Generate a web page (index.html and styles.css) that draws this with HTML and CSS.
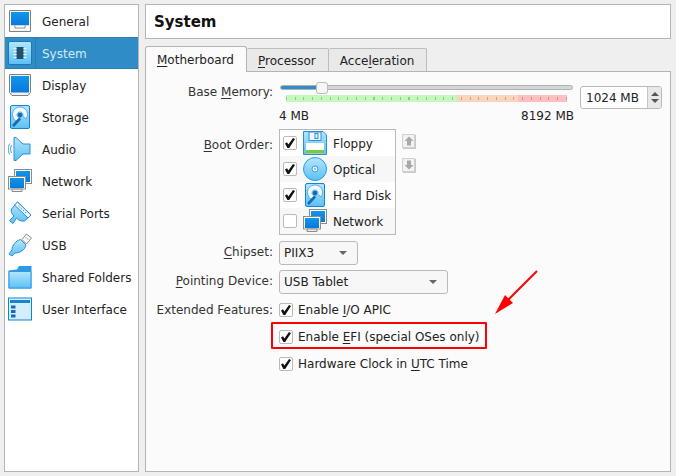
FILE: index.html
```html
<!DOCTYPE html>
<html lang="en">
<head>
<meta charset="utf-8">
<title>System</title>
<link rel="stylesheet" href="styles.css">
</head>
<body>
<svg class="defs" width="0" height="0" aria-hidden="true">
  <defs>
    <linearGradient id="blue" x1="0" y1="0" x2="0" y2="1"><stop offset="0" stop-color="#0f97ea"/><stop offset="1" stop-color="#0a78dc"/></linearGradient>
    <linearGradient id="sky" x1="0" y1="0" x2="0" y2="1"><stop offset="0" stop-color="#b4e6fc"/><stop offset="1" stop-color="#5cc0f4"/></linearGradient>
    <symbol id="i-general" viewBox="0 0 24 24"><path d="M1.500 1.500H22.500V22.500H1.500Z" fill="#f6f6f6" stroke="#808080"/><rect x="3" y="3" width="18" height="13.500" fill="url(#blue)"/><path d="M3 16.500H21V21H3Z" fill="#fff"/><path d="M7 16.500V19H17V16.500" fill="none" stroke="#8c8c8c"/></symbol>
    <symbol id="i-system" viewBox="0 0 24 24"><rect x="0.500" y="0.500" width="23" height="23" rx="1.500" fill="url(#sky)" stroke="#1a78bd"/><rect x="8.500" y="6" width="7" height="12" fill="#24506f"/><path d="M5.500 7.500H8.500M5.500 10.500H8.500M5.500 13.500H8.500M5.500 16.500H8.500M15.500 7.500H18.500M15.500 10.500H18.500M15.500 13.500H18.500M15.500 16.500H18.500" stroke="#e6f6ff"/></symbol>
    <symbol id="i-display" viewBox="0 0 24 24"><path d="M1.500 1.500H22.500V19.500L20 22.500H4L1.500 19.500Z" fill="#f2f2f2" stroke="#808080"/><rect x="3" y="3" width="18" height="16.500" fill="url(#blue)"/></symbol>
    <symbol id="i-storage" viewBox="0 0 24 24"><rect x="2.500" y="0.500" width="19" height="23" rx="1.500" fill="url(#sky)" stroke="#1583cf"/><path d="M12 2C7.500 2 4.500 5.500 4.500 9.500C4.500 13 6.500 15.500 9 16.500L13 12.500C11 13 9 12 9 10C9 8 10.500 6.800 12.500 7C14.500 7.200 15.500 9 14.800 11L18 14C19 12.500 19.500 11 19.500 9.500C19.500 5.500 16.500 2 12 2Z" fill="#eef9ff" stroke="#2f93d8" stroke-width=".7"/><circle cx="12" cy="10" r="2.300" fill="#1668b8"/><path d="M5 21L12 13.500" stroke="#1668b8" stroke-width="2.600"/></symbol>
    <symbol id="i-audio" viewBox="0 0 24 24"><path d="M6 0.500H8L15 7H22V17H15L8 23.500H6Z" fill="url(#sky)" stroke="#2a8fd8"/><path d="M3.500 8C2.300 10.500 2.300 13.500 3.500 16M1.800 6.500C-0.200 10 -0.200 14 1.800 17.500" fill="none" stroke="#2a8fd8" stroke-width=".9"/></symbol>
    <symbol id="i-network" viewBox="0 0 24 24"><rect x="6.500" y="0.500" width="17" height="14" fill="#fff" stroke="#8c8c8c"/><rect x="8" y="2" width="14" height="11" fill="url(#blue)"/><rect x="0.500" y="7.500" width="17" height="12.500" fill="#fff" stroke="#8c8c8c"/><rect x="2" y="9" width="14" height="10" fill="url(#blue)"/><path d="M4 20H14V22.500H4Z" fill="#eee" stroke="#8c8c8c"/></symbol>
    <symbol id="i-serial" viewBox="0 0 24 24"><path d="M9.500 1L23 14L16.500 20C13.500 20.500 10.500 19.500 8.500 17L5 22.500L1.500 19.500L6 15C4 13 2.800 11 3.500 8Z" fill="url(#sky)" stroke="#2a8fd8"/><path d="M9.500 1L23 14L20 17L6.500 4Z" fill="#eaf7ff" stroke="#2a8fd8"/><path d="M10.500 5L18.500 12.500" stroke="#2a8fd8" stroke-dasharray="1.500 1.500"/></symbol>
    <symbol id="i-usb" viewBox="0 0 24 24"><path d="M12.500 6.500L18 12C17 17 12 20 7 20L4 23L1 21L4 17C4 12.500 8 7.500 12.500 6.500Z" fill="url(#sky)" stroke="#2a8fd8"/><path d="M14 6.500L18.500 1L23.500 5L18.500 11Z" fill="#f6f6f6" stroke="#8c8c8c"/><path d="M18 4.500L19 5.500M20 6.500L19.500 7" stroke="#777"/></symbol>
    <symbol id="i-folder" viewBox="0 0 24 24"><path d="M0.500 5.500L9 4.500L11 1H23.500V23.500H0.500Z" fill="#2d9be4"/><path d="M1 6.500H23V23H1Z" fill="url(#sky)" stroke="#2d9be4"/></symbol>
    <symbol id="i-ui" viewBox="0 0 24 24"><rect x="0.500" y="1" width="23" height="22" fill="#d4effc" stroke="#1583cf"/><rect x="2" y="3" width="20" height="3" fill="#1583cf"/><path d="M3 8.500H7.500V11.500H3ZM3 13H7.500V16H3ZM3 17.500H7.500V20.500H3Z" fill="#1469b8"/></symbol>
    <symbol id="i-floppy" viewBox="0 0 24 24"><path d="M0.500 0.500H20L23.500 4V23.500H0.500Z" fill="url(#sky)" stroke="#2a8fd8"/><path d="M6 1H18V9.500H6Z" fill="#f0f9ff" stroke="#2a8fd8"/><rect x="12" y="2.500" width="3" height="5" fill="none" stroke="#2a8fd8"/><rect x="3" y="12" width="18" height="10.500" fill="#fff"/><rect x="3" y="19" width="18" height="3.500" fill="#7ac74a"/></symbol>
    <symbol id="i-optical" viewBox="0 0 24 24"><circle cx="12" cy="12" r="11.500" fill="url(#sky)" stroke="#2a9be4"/><circle cx="12" cy="12" r="3" fill="#e8f6ff" stroke="#3b9fdd"/><circle cx="12" cy="12" r="1" fill="#6dbcee"/></symbol>
  </defs>
</svg>

<main class="page">
  <nav class="side">
    <div class="side-item"><svg class="ico"><use href="#i-general"/></svg><span>General</span></div>
    <div class="side-item active"><svg class="ico"><use href="#i-system"/></svg><span>System</span></div>
    <div class="side-item"><svg class="ico"><use href="#i-display"/></svg><span>Display</span></div>
    <div class="side-item"><svg class="ico"><use href="#i-storage"/></svg><span>Storage</span></div>
    <div class="side-item"><svg class="ico"><use href="#i-audio"/></svg><span>Audio</span></div>
    <div class="side-item"><svg class="ico"><use href="#i-network"/></svg><span>Network</span></div>
    <div class="side-item"><svg class="ico"><use href="#i-serial"/></svg><span>Serial Ports</span></div>
    <div class="side-item"><svg class="ico"><use href="#i-usb"/></svg><span>USB</span></div>
    <div class="side-item"><svg class="ico"><use href="#i-folder"/></svg><span>Shared Folders</span></div>
    <div class="side-item"><svg class="ico"><use href="#i-ui"/></svg><span>User Interface</span></div>
  </nav>

  <section class="content">
    <h1 class="title">System</h1>
    <div class="tabs">
      <div class="tab current"><u>M</u>otherboard</div>
      <div class="tab"><u>P</u>rocessor</div>
      <div class="tab">Acce<u>l</u>eration</div>
    </div>
    <div class="panel">
      <div class="row row-mem">
        <div class="label">Base <u>M</u>emory:</div>
        <div class="mem">
          <div class="mem-main">
            <div class="slider"><div class="fill"></div><div class="thumb"></div></div>
            <div class="scale"><i class="g"></i><i class="o"></i><i class="r"></i></div>
            <div class="limits"><span>4 MB</span><span>8192 MB</span></div>
          </div>
          <div class="spin"><span>1024 MB</span><div class="spin-btn"><b class="up"></b><b class="down"></b></div></div>
        </div>
      </div>

      <div class="row row-boot">
        <div class="label label-boot"><u>B</u>oot Order:</div>
        <div class="boot">
          <div class="boot-item"><span class="cb on"></span><svg class="ico"><use href="#i-floppy"/></svg><span class="boot-name">Floppy</span></div>
          <div class="boot-item alt"><span class="cb on"></span><svg class="ico"><use href="#i-optical"/></svg><span class="boot-name">Optical</span></div>
          <div class="boot-item"><span class="cb on"></span><svg class="ico"><use href="#i-storage"/></svg><span class="boot-name">Hard Disk</span></div>
          <div class="boot-item alt"><span class="cb"></span><svg class="ico"><use href="#i-network"/></svg><span class="boot-name">Network</span></div>
        </div>
        <div class="moves">
          <div class="move"><svg width="10" height="10" viewBox="0 0 10 10"><path d="M5 0.500L9.500 5H7V9.500H3V5H0.500Z" fill="#a8a8a8"/></svg></div>
          <div class="move"><svg width="10" height="10" viewBox="0 0 10 10"><path d="M5 9.500L9.500 5H7V0.500H3V5H0.500Z" fill="#a8a8a8"/></svg></div>
        </div>
      </div>

      <div class="row row-combo">
        <div class="label"><u>C</u>hipset:</div>
        <div class="combo chipset"><span>PIIX3</span><b class="caret"></b></div>
      </div>
      <div class="row row-combo">
        <div class="label"><u>P</u>ointing Device:</div>
        <div class="combo pointing"><span>USB Tablet</span><b class="caret"></b></div>
      </div>

      <div class="row row-check first">
        <div class="label">Extended Features:</div>
        <div class="check"><span class="cb on"></span><span>Enable <u>I</u>/O APIC</span></div>
      </div>
      <div class="row row-check">
        <div class="label"></div>
        <div class="check"><span class="cb on"></span><span>Enable <u>E</u>FI (special OSes only)</span></div>
      </div>
      <div class="row row-check">
        <div class="label"></div>
        <div class="check"><span class="cb on"></span><span>Hardware Clock in <u>U</u>TC Time</span></div>
      </div>
    </div>
  </section>
</main>

<div class="mark-box"></div>
<svg class="mark-arrow" width="50" height="52" viewBox="0 0 50 52"><path d="M46 2L17 31" stroke="#f00" stroke-width="2" fill="none"/><path d="M4 45L14 26L22 34Z" fill="#f00"/></svg>
</body>
</html>
```

FILE: styles.css
```css
* { box-sizing: border-box; }
html, body { margin: 0; padding: 0; }
body {
  width: 676px;
  height: 476px;
  overflow: hidden;
  background: #efefef;
  color: #222;
  font: 12px/16px "DejaVu Sans", sans-serif;
  position: relative;
}
u { text-underline-offset: 2px; text-decoration-thickness: 1px; }
.defs { position: absolute; }

.page { display: flex; gap: 6px; padding: 4px 5px 4px 4px; height: 476px; }

.side {
  width: 135px;
  flex: none;
  background: #fff;
  border: 1px solid #b4b4b4;
}
.side-item {
  height: 32px;
  display: flex;
  align-items: center;
  gap: 9px;
  padding-left: 3px;
}
.side-item > span { padding-top: 2px; margin-left: 1px; }
.side-item.active {
  background: linear-gradient(90deg, #308cc6 30px, #2a7db2 30px 31px, #308cc6 31px);
  color: #cfeafa;
  box-shadow: inset 0 1px 0 #2b7fb5, inset 0 -1px 0 #2b7fb5;
}
.ico { width: 24px; height: 24px; flex: none; }

.content { flex: 1; display: flex; flex-direction: column; min-width: 0; }
.title {
  margin: 0;
  height: 35px;
  padding-left: 8px;
  background: #fff;
  border: 1px solid #b4b4b4;
  font-size: 15px;
  line-height: 35px;
  font-weight: bold;
  color: #111;
}

.tabs { display: flex; margin-top: 7px; height: 25px; align-items: flex-end; position: relative; z-index: 1; }
.tab {
  height: 23px;
  padding: 4px 12px 0 11px;
  background: #e9e9e9;
  border: 1px solid #bdbdbd;
  border-bottom: 0;
  border-left-width: 0;
  border-radius: 2px 2px 0 0;
}
.tab.current {
  height: 26px;
  margin-bottom: -1px;
  padding: 5px 12px 0 11px;
  background: #fbfbfb;
  border-left-width: 1px;
  border-radius: 3px 3px 0 0;
  border-color: #b4b4b4;
}
.panel {
  flex: 1;
  background: #fbfbfb;
  border: 1px solid #b4b4b4;
  padding-top: 11px;
}

.row { display: flex; }
.label { width: 127px; flex: none; text-align: right; color: #333; margin-right: 6px; }

.row-mem { height: 46px; }
.row-mem .label { padding-top: 1px; }
.mem { display: flex; gap: 6px; }
.mem-main { width: 295px; }
.slider { position: relative; height: 5px; margin: 2px 0 0 1px; width: 293px; background: #d6d6d6; border: 1px solid #b0b0b0; border-radius: 3px; }
.fill { width: 40px; height: 3px; background: #308cc6; border-radius: 2px; }
.thumb { position: absolute; left: 35px; top: -4px; width: 12px; height: 12px; background: #f6f6f6; border: 1px solid #bbb; border-radius: 3px; }
.scale {
  display: flex;
  height: 7px;
  margin: 5px 0 0 7px;
  width: 281px;
  position: relative;
}
.scale::after {
  content: "";
  position: absolute;
  left: 0;
  right: 0;
  top: 2px;
  height: 3px;
  background: repeating-linear-gradient(90deg, rgba(0, 0, 0, .22) 0 1px, transparent 1px 8.75px);
}
.scale i { display: block; height: 7px; }
.g { width: 171px; background: #c4f9be; }
.o { width: 61px; background: #fcd5bd; }
.r { width: 49px; background: #fdc0c0; }
.limits { display: flex; justify-content: space-between; margin-top: 6px; }
.spin {
  width: 82px;
  height: 23px;
  margin-top: 3px;
  padding-left: 5px;
  display: flex;
  justify-content: space-between;
  align-items: center;
  background: #fff;
  border: 1px solid #b9b9b9;
  border-radius: 3px;
}
.spin-btn { width: 14px; height: 21px; background: #e8e8e8; border-left: 1px solid #c4c4c4; display: flex; flex-direction: column; align-items: center; justify-content: center; gap: 3px; border-radius: 0 2px 2px 0; }
.up, .down { width: 0; height: 0; border: 4px solid transparent; }
.up { border-top: 0; border-bottom: 4px solid #555; }
.down { border-bottom: 0; border-top: 4px solid #555; }

.row-boot { height: 112px; }
.label-boot { padding-top: 8px; }
.boot { width: 117px; height: 106px; background: #fff; border: 1px solid #b9b9b9; }
.boot-item { height: 26px; display: flex; align-items: center; padding-left: 3px; }
.boot-item.alt { background: #f7f7f7; }
.boot-item .ico { margin: 0 6px 0 6px; }
.boot-name { padding-top: 2px; }
.cb {
  width: 14px;
  height: 14px;
  flex: none;
  background: #fff;
  border: 1px solid #b9b9b9;
  border-radius: 2px;
  position: relative;
}
.cb.on::after {
  content: "";
  position: absolute;
  left: 1px;
  top: 1px;
  width: 10px;
  height: 10px;
  background: #111;
  clip-path: polygon(0 55%, 20% 42%, 34% 66%, 80% 0, 100% 10%, 42% 100%, 24% 100%);
}
.moves { margin: 5px 0 0 6px; display: flex; flex-direction: column; gap: 10px; }
.move { width: 13px; height: 14px; display: flex; align-items: center; justify-content: center; background: #f2f2f2; border: 1px solid #d0d0d0; box-shadow: 1px 1px 0 #c8c8c8; }

.row-combo { height: 29px; }
.row-combo .label { padding-top: 3px; }
.combo {
  height: 24px;
  padding: 0 10px 0 4px;
  display: flex;
  align-items: center;
  justify-content: space-between;
  background: #f7f7f7;
  border: 1px solid #b9b9b9;
  border-radius: 3px;
}
.chipset { width: 79px; }
.pointing { width: 169px; }
.caret { width: 0; height: 0; border: 4px solid transparent; border-bottom: 0; border-top: 4px solid #666; }

.row-check { height: 27px; }
.row-check.first { margin-top: -1px; }
.row-check .label { padding-top: 4px; }
.check { display: flex; align-items: center; gap: 5px; height: 24px; }

.mark-box { position: absolute; left: 271px; top: 322px; width: 216px; height: 27px; border: 2px solid #f00; border-radius: 1px; }
.mark-arrow { position: absolute; left: 491px; top: 269px; }
```
